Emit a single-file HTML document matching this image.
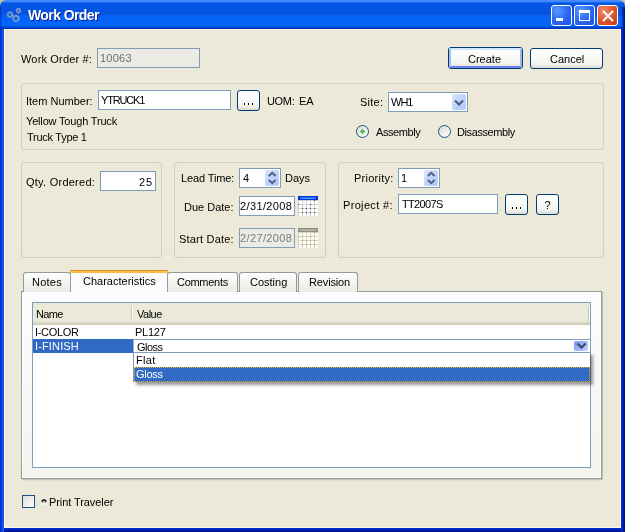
<!DOCTYPE html>
<html><head><meta charset="utf-8">
<style>
*{box-sizing:border-box}
html,body{margin:0;padding:0}
body{width:625px;height:532px;position:relative;overflow:hidden;background:#CFC7A4;font:11px "Liberation Sans",sans-serif;color:#000}
.a{position:absolute}
.t{position:absolute;white-space:nowrap;line-height:13px;height:13px;will-change:transform}
.r{text-align:right}
#title{left:0;top:0;width:625px;height:29px;border-radius:6px 6px 0 0;
 background:linear-gradient(180deg,#4a90f8 0,#3b85fa 1.5px,#1a6cf5 2.5px,#0656e6 3.5px,#0552e0 14px,#0562f6 16px,#0565fa 26px,#0048d8 27px,#0032b8 29px)}
#lf{left:0;top:29px;width:4px;height:503px;background:linear-gradient(90deg,#0018cf,#0a33da 25%,#1645e3 50%,#0860f0 75%)}
#rf{left:621px;top:29px;width:4px;height:503px;background:linear-gradient(90deg,#0032e6,#002ac8 25%,#0020b0 50%,#00168f 75%)}
#bf{left:4px;top:528px;width:618px;height:4px;background:linear-gradient(180deg,#0032e6,#002ac8 25%,#0020b0 50%,#00168f 75%)}
#client{left:4px;top:29px;width:617px;height:499px;background:#ECE9D8;border:1px solid #FFF8DC}
.ttl{left:28px;top:6px;font:bold 14px "Liberation Sans",sans-serif;letter-spacing:-0.6px;color:#fff;text-shadow:1px 1px 0 #0a1e8e;line-height:18px}
.tb{width:21px;height:21px;top:5px;border:1px solid #fff;border-radius:3px;
 background:radial-gradient(circle at 30% 25%,#5a9cff 0,#2f6df5 45%,#1d4fe0 100%)}
.tbc{background:radial-gradient(circle at 30% 25%,#f08a6a 0,#e05a35 45%,#c63c12 100%)}
.grp{position:absolute;border:1px solid #D0D0BF;border-radius:3px}
.edit{position:absolute;border:1px solid #7F9DB9;background:#fff}
.dis{background:#EBEBE4;color:#777}
.btn{position:absolute;border:1px solid #003C74;border-radius:3px;
 background:linear-gradient(180deg,#fff 0,#fcfcfb 30%,#f2f2ee 80%,#dcd8cc 100%);text-align:center}
.tab{position:absolute;top:272px;height:20px;border:1px solid #919B9C;border-bottom:none;border-radius:3px 3px 0 0;background:linear-gradient(180deg,#fefefe 0,#f6f6f3 40%,#ecebe5 100%)}
.cbtn{position:absolute;border-radius:2px;background:linear-gradient(135deg,#dce6fe 0,#c3d5fc 45%,#b1c8f7 100%)}
.radio{position:absolute;width:13px;height:13px;border-radius:50%;border:1px solid #1C5180;background:linear-gradient(135deg,#dcdcd7,#fff)}
.spin{position:absolute;border-radius:2px;background:linear-gradient(180deg,#dde6fe,#b8cbfa)}
</style></head><body>
<div class="a" id="title"></div>
<div class="a" style="left:0;top:7px;width:4px;height:22px;background:linear-gradient(90deg,rgba(0,24,190,.75),rgba(0,40,210,.35) 25%,rgba(0,60,230,.1) 50%,rgba(0,0,0,0) 75%)"></div>
<div class="a" style="left:621px;top:7px;width:4px;height:22px;background:linear-gradient(90deg,rgba(0,0,0,0),rgba(0,30,170,.35) 25%,rgba(0,25,150,.65) 50%,rgba(0,20,130,.85) 75%)"></div>
<div class="a" id="lf"></div>
<div class="a" id="bf"></div>
<div class="a" id="rf"></div>
<div class="a" id="client"></div>

<!-- title contents -->
<svg class="a" style="left:6px;top:7px" width="16" height="16" viewBox="0 0 16 16">
 <g fill="none" stroke="#8ba5c2" stroke-width="2" stroke-dasharray="1.6 0.35">
  <circle cx="4" cy="7.6" r="2.3"/>
  <circle cx="12.5" cy="3.6" r="1.8"/>
  <circle cx="10" cy="11.5" r="2.7"/>
 </g>
</svg>
<div class="t ttl" style="height:18px">Work Order</div>
<div class="a tb" style="left:551px"><div class="a" style="left:4px;top:12px;width:7px;height:3px;background:#fff"></div></div>
<div class="a tb" style="left:574px"><div class="a" style="left:4px;top:4px;width:11px;height:11px;border:1px solid #fff;border-top-width:3px"></div></div>
<div class="a tb tbc" style="left:597px">
 <svg class="a" style="left:4px;top:4px" width="12" height="12" viewBox="0 0 12 12"><path d="M1 1L11 11M11 1L1 11" stroke="#fff" stroke-width="2"/></svg>
</div>

<!-- Work order row -->
<div class="edit dis" style="left:97px;top:48px;width:103px;height:20px"></div>

<div class="btn" style="left:448px;top:47px;width:75px;height:22px"><div class="a" style="left:0;top:0;right:0;bottom:0;border:2px solid;border-color:#cee7ff #98b8ea #6982ee #a6c1ec;border-radius:2px"></div></div>
<div class="btn" style="left:530px;top:48px;width:73px;height:21px"></div>

<!-- group 1 -->
<div class="grp" style="left:21px;top:83px;width:583px;height:67px"></div>
<div class="edit" style="left:98px;top:90px;width:133px;height:20px"></div>
<div class="btn" style="left:237px;top:90px;width:23px;height:21px"></div>
<div class="a" style="left:244px;top:103px;width:1px;height:2px;background:#000"></div><div class="a" style="left:248px;top:103px;width:1px;height:2px;background:#000"></div><div class="a" style="left:252px;top:103px;width:1px;height:2px;background:#000"></div>

<div class="edit" style="left:388px;top:92px;width:80px;height:20px"></div>
<div class="cbtn" style="left:452px;top:94px;width:14px;height:16px"></div><svg class="a" style="left:454px;top:99px" width="10" height="7" viewBox="0 0 10 7"><path d="M1 1.5L5 5.5L9 1.5" fill="none" stroke="#4D6185" stroke-width="2.2"/></svg>

<div class="radio" style="left:356px;top:125px"></div>
<div class="a" style="left:360px;top:129px;width:5px;height:5px;background:radial-gradient(circle,#55d455 0,#21a821 60%,#148a14 100%);clip-path:polygon(50% 0,100% 50%,50% 100%,0 50%)"></div>
<div class="radio" style="left:438px;top:125px"></div>

<!-- group 2,3,4 -->
<div class="grp" style="left:21px;top:162px;width:141px;height:96px"></div>
<div class="grp" style="left:174px;top:162px;width:152px;height:96px"></div>
<div class="grp" style="left:338px;top:162px;width:266px;height:96px"></div>

<div class="edit" style="left:100px;top:171px;width:56px;height:20px"></div>

<div class="edit" style="left:239px;top:168px;width:42px;height:20px"></div>
<div class="cbtn" style="left:265px;top:170px;width:14px;height:16px"></div>
<svg class="a" style="left:267px;top:171px" width="10" height="14" viewBox="0 0 10 14"><path d="M1.8 5L5.2 1.8L8.6 5M1.8 9L5.2 12.2L8.6 9" fill="none" stroke="#4D6185" stroke-width="2"/></svg>
<div class="edit" style="left:239px;top:196px;width:56px;height:20px"></div>
<div class="edit dis" style="left:239px;top:228px;width:56px;height:20px"></div>

<div class="edit" style="left:398px;top:168px;width:42px;height:20px"></div>
<div class="cbtn" style="left:424px;top:170px;width:14px;height:16px"></div>
<svg class="a" style="left:426px;top:171px" width="10" height="14" viewBox="0 0 10 14"><path d="M1.8 5L5.2 1.8L8.6 5M1.8 9L5.2 12.2L8.6 9" fill="none" stroke="#4D6185" stroke-width="2"/></svg>
<div class="edit" style="left:398px;top:194px;width:100px;height:20px"></div>
<div class="btn" style="left:505px;top:194px;width:23px;height:21px"></div>
<div class="a" style="left:512px;top:207px;width:1px;height:2px;background:#000"></div><div class="a" style="left:516px;top:207px;width:1px;height:2px;background:#000"></div><div class="a" style="left:520px;top:207px;width:1px;height:2px;background:#000"></div>
<div class="btn" style="left:536px;top:194px;width:23px;height:21px"></div>
<div class="t" style="left:536px;top:199px;width:23px;text-align:center">?</div>

<svg class="a" style="left:298px;top:196px" width="20" height="20" viewBox="0 0 20 20"><rect x="0" y="0" width="20" height="20" fill="#cfcfcf"/><rect x="0" y="0" width="20" height="4" fill="#0a2ae6"/><rect x="2" y="1" width="16" height="2" fill="#1f70e8"/><rect x="4" y="2" width="12" height="1" fill="#38a8f0"/><rect x="1" y="5" width="3" height="3" fill="#ffffff"/><rect x="5" y="5" width="3" height="3" fill="#ffffff"/><rect x="9" y="5" width="3" height="3" fill="#ffffff"/><rect x="13" y="5" width="3" height="3" fill="#ffffff"/><rect x="17" y="5" width="3" height="3" fill="#ffffff"/><rect x="1" y="9" width="3" height="3" fill="#ffffff"/><rect x="5" y="9" width="3" height="3" fill="#ffffff"/><rect x="9" y="9" width="3" height="3" fill="#ffffff"/><rect x="13" y="9" width="3" height="3" fill="#ffffff"/><rect x="17" y="9" width="3" height="3" fill="#ffffff"/><rect x="1" y="13" width="3" height="3" fill="#ffffff"/><rect x="5" y="13" width="3" height="3" fill="#ffffff"/><rect x="9" y="13" width="3" height="3" fill="#ffffff"/><rect x="13" y="13" width="3" height="3" fill="#ffffff"/><rect x="17" y="13" width="3" height="3" fill="#ffffff"/><rect x="1" y="17" width="3" height="3" fill="#ffffff"/><rect x="5" y="17" width="3" height="3" fill="#ffffff"/><rect x="9" y="17" width="3" height="3" fill="#ffffff"/><rect x="13" y="17" width="3" height="3" fill="#ffffff"/><rect x="17" y="17" width="3" height="3" fill="#ffffff"/><rect x="16" y="4" width="1" height="1" fill="#4a4a4a"/><rect x="0" y="8" width="1" height="1" fill="#4a4a4a"/><rect x="12" y="8" width="1" height="1" fill="#4a4a4a"/><rect x="8" y="12" width="1" height="1" fill="#4a4a4a"/><rect x="12" y="12" width="1" height="1" fill="#4a4a4a"/><rect x="16" y="12" width="1" height="1" fill="#4a4a4a"/><rect x="4" y="16" width="1" height="1" fill="#4a4a4a"/><rect x="8" y="16" width="1" height="1" fill="#4a4a4a"/><rect x="12" y="16" width="1" height="1" fill="#4a4a4a"/><rect x="16" y="16" width="1" height="1" fill="#4a4a4a"/><rect x="4" y="12" width="1" height="1" fill="#4a4a4a"/></svg>
<svg class="a" style="left:298px;top:228px" width="20" height="20" viewBox="0 0 20 20"><rect x="0" y="0" width="20" height="20" fill="#d6d4c6"/><rect x="0" y="0" width="20" height="4" fill="#8e8d80"/><rect x="1" y="1" width="18" height="2" fill="#a9a89b"/><rect x="3" y="2" width="14" height="1" fill="#bdbcb0"/><rect x="1" y="5" width="3" height="3" fill="#fdfbf0"/><rect x="5" y="5" width="3" height="3" fill="#fdfbf0"/><rect x="9" y="5" width="3" height="3" fill="#fdfbf0"/><rect x="13" y="5" width="3" height="3" fill="#fdfbf0"/><rect x="17" y="5" width="3" height="3" fill="#fdfbf0"/><rect x="1" y="9" width="3" height="3" fill="#fdfbf0"/><rect x="5" y="9" width="3" height="3" fill="#fdfbf0"/><rect x="9" y="9" width="3" height="3" fill="#fdfbf0"/><rect x="13" y="9" width="3" height="3" fill="#fdfbf0"/><rect x="17" y="9" width="3" height="3" fill="#fdfbf0"/><rect x="1" y="13" width="3" height="3" fill="#fdfbf0"/><rect x="5" y="13" width="3" height="3" fill="#fdfbf0"/><rect x="9" y="13" width="3" height="3" fill="#fdfbf0"/><rect x="13" y="13" width="3" height="3" fill="#fdfbf0"/><rect x="17" y="13" width="3" height="3" fill="#fdfbf0"/><rect x="1" y="17" width="3" height="3" fill="#fdfbf0"/><rect x="5" y="17" width="3" height="3" fill="#fdfbf0"/><rect x="9" y="17" width="3" height="3" fill="#fdfbf0"/><rect x="13" y="17" width="3" height="3" fill="#fdfbf0"/><rect x="17" y="17" width="3" height="3" fill="#fdfbf0"/><rect x="16" y="4" width="1" height="1" fill="#9a9888"/><rect x="0" y="8" width="1" height="1" fill="#9a9888"/><rect x="12" y="8" width="1" height="1" fill="#9a9888"/><rect x="8" y="12" width="1" height="1" fill="#9a9888"/><rect x="12" y="12" width="1" height="1" fill="#9a9888"/><rect x="16" y="12" width="1" height="1" fill="#9a9888"/><rect x="4" y="16" width="1" height="1" fill="#9a9888"/><rect x="8" y="16" width="1" height="1" fill="#9a9888"/><rect x="12" y="16" width="1" height="1" fill="#9a9888"/><rect x="16" y="16" width="1" height="1" fill="#9a9888"/><rect x="4" y="12" width="1" height="1" fill="#9a9888"/></svg>
<!-- tabs -->
<div class="a" style="left:21px;top:291px;width:581px;height:188px;border:1px solid #919B9C;box-shadow:1px 1px 1px rgba(80,80,80,.25)"><div class="a" style="left:0;top:0;right:0;bottom:0;border:1px solid #fff;background:linear-gradient(180deg,#fcfcfe,#f4f3ee)"></div></div>
<div class="tab" style="left:23px;width:48px"></div>
<div class="tab" style="left:167px;width:71px"></div>
<div class="tab" style="left:239px;width:58px"></div>
<div class="tab" style="left:298px;width:60px"></div>
<div class="a" style="left:70px;top:270px;width:98px;height:22px;background:#fcfcfe;border-left:1px solid #919B9C;border-right:1px solid #919B9C;border-top:none"></div>
<div class="a" style="left:70px;top:270px;width:98px;height:3px;border-radius:2px 2px 0 0;background:linear-gradient(180deg,#e68b2c 0,#e68b2c 33%,#ffc73c 34%,#f7b845 100%)"></div>

<!-- table -->
<div class="edit" style="left:32px;top:302px;width:559px;height:166px"></div>
<div class="a" style="left:33px;top:303px;width:557px;height:22px;background:linear-gradient(180deg,#ebead8 0,#ebead8 82%,#e2decd 86%,#d6d2bd 93%,#cbc7b8 100%)"></div>
<div class="a" style="left:33px;top:339px;width:100px;height:14px;background:#316AC5"></div>
<div class="a" style="left:131px;top:306px;width:2px;height:15px;border-left:1px solid #c7c5b2;border-right:1px solid #fff"></div>
<div class="a" style="left:588px;top:306px;width:2px;height:15px;border-left:1px solid #c7c5b2;border-right:1px solid #fff"></div>
<div class="a" style="left:133px;top:339px;width:458px;height:14px;border:1px solid #7F9DB9;border-left-color:#9db2c8;background:#fff"></div>
<div class="cbtn" style="left:574px;top:341px;width:14px;height:10px;background:linear-gradient(135deg,#7b96f2 0,#9fb3f7 50%,#c6d2fa 100%)"></div>
<svg class="a" style="left:576px;top:342px" width="11" height="7" viewBox="0 0 11 7"><path d="M1.5 1.5L5.5 5.5L9.5 1.5" fill="none" stroke="#3d4d7a" stroke-width="2.4"/></svg>
<div class="a" style="left:133px;top:352px;width:457px;height:30px;border-left:1px solid #7F9DB9;border-top:1px solid #7F9DB9;background:#fff;box-shadow:3px 3px 3px rgba(0,0,0,.4)"></div>
<div class="a" style="left:134px;top:367px;width:456px;height:15px;background:#316AC5;outline:1px dotted #f0b020;outline-offset:-1px"></div>


<!-- bottom -->
<div class="a" style="left:22px;top:495px;width:13px;height:13px;border:1px solid #1C5180;background:linear-gradient(135deg,#dcdcd7,#fff)"></div>
<svg class="a" style="left:41px;top:498px" width="6" height="8" viewBox="0 0 6 8"><path d="M0.3 7L0.3 3.5Q3 0 5.7 3.5L5.7 7Z" fill="#f6f6f4"/><path d="M0.8 3.6Q3 0.6 5.2 3.6" fill="none" stroke="#2e2e2e" stroke-width="2"/><path d="M1.2 4.6Q3 3 4.8 4.6" fill="none" stroke="#9a9a9a" stroke-width="1"/></svg>
<!-- TEXTS -->
<div class="t" style="left:21px;top:53px;letter-spacing:0.167px">Work Order #:</div>
<div class="t" style="left:100px;top:52px;letter-spacing:0.25px;color:#6d6d6d">10063</div>
<div class="t" style="left:468px;top:53px">Create</div>
<div class="t" style="left:550px;top:53px">Cancel</div>
<div class="t" style="left:26px;top:95px">Item Number:</div>
<div class="t" style="left:101px;top:94px;letter-spacing:-1.167px">YTRUCK1</div>
<div class="t" style="left:267px;top:95px;letter-spacing:-0.333px">UOM:</div>
<div class="t" style="left:299px;top:95px">EA</div>
<div class="t" style="left:26px;top:115px;letter-spacing:-0.176px">Yellow Tough Truck</div>
<div class="t" style="left:27px;top:131px;letter-spacing:-0.273px">Truck Type 1</div>
<div class="t" style="left:360px;top:96px;letter-spacing:0.25px">Site:</div>
<div class="t" style="left:391px;top:96px;letter-spacing:-1.0px">WH1</div>
<div class="t" style="left:376px;top:126px;letter-spacing:-0.429px">Assembly</div>
<div class="t" style="left:457px;top:126px;letter-spacing:-0.4px">Disassembly</div>
<div class="t" style="left:26px;top:176px;letter-spacing:0.25px">Qty. Ordered:</div>
<div class="t" style="left:139px;top:176px;letter-spacing:1.0px">25</div>
<div class="t" style="left:181px;top:172px;letter-spacing:-0.111px">Lead Time:</div>
<div class="t" style="left:243px;top:172px">4</div>
<div class="t" style="left:285px;top:172px">Days</div>
<div class="t" style="left:184px;top:201px">Due Date:</div>
<div class="t" style="left:240px;top:200px;letter-spacing:0.375px">2/31/2008</div>
<div class="t" style="left:179px;top:233px;letter-spacing:0.2px">Start Date:</div>
<div class="t" style="left:240px;top:232px;letter-spacing:0.375px;color:#7b7b7b">2/27/2008</div>
<div class="t" style="left:354px;top:172px;letter-spacing:0.25px">Priority:</div>
<div class="t" style="left:401px;top:172px">1</div>
<div class="t" style="left:343px;top:199px;letter-spacing:0.333px">Project #:</div>
<div class="t" style="left:402px;top:198px;letter-spacing:-0.667px">TT2007S</div>
<div class="t" style="left:32px;top:276px;letter-spacing:0.25px">Notes</div>
<div class="t" style="left:83px;top:275px">Characteristics</div>
<div class="t" style="left:177px;top:276px;letter-spacing:-0.286px">Comments</div>
<div class="t" style="left:250px;top:276px">Costing</div>
<div class="t" style="left:309px;top:276px;letter-spacing:-0.143px">Revision</div>
<div class="t" style="left:36px;top:308px;letter-spacing:-0.667px">Name</div>
<div class="t" style="left:137px;top:308px;letter-spacing:-0.5px">Value</div>
<div class="t" style="left:35px;top:326px;letter-spacing:-0.333px">I-COLOR</div>
<div class="t" style="left:135px;top:326px;letter-spacing:-0.25px">PL127</div>
<div class="t" style="left:35px;top:340px;letter-spacing:0.143px;color:#fff">I-FINISH</div>
<div class="t" style="left:137px;top:341px;letter-spacing:-0.5px">Gloss</div>
<div class="t" style="left:136px;top:354px;letter-spacing:0.333px">Flat</div>
<div class="t" style="left:136px;top:368px;letter-spacing:-0.25px;color:#fff">Gloss</div>
<div class="t" style="left:49px;top:496px;letter-spacing:-0.077px">Print Traveler</div>
<!-- /TEXTS -->
</body></html>
